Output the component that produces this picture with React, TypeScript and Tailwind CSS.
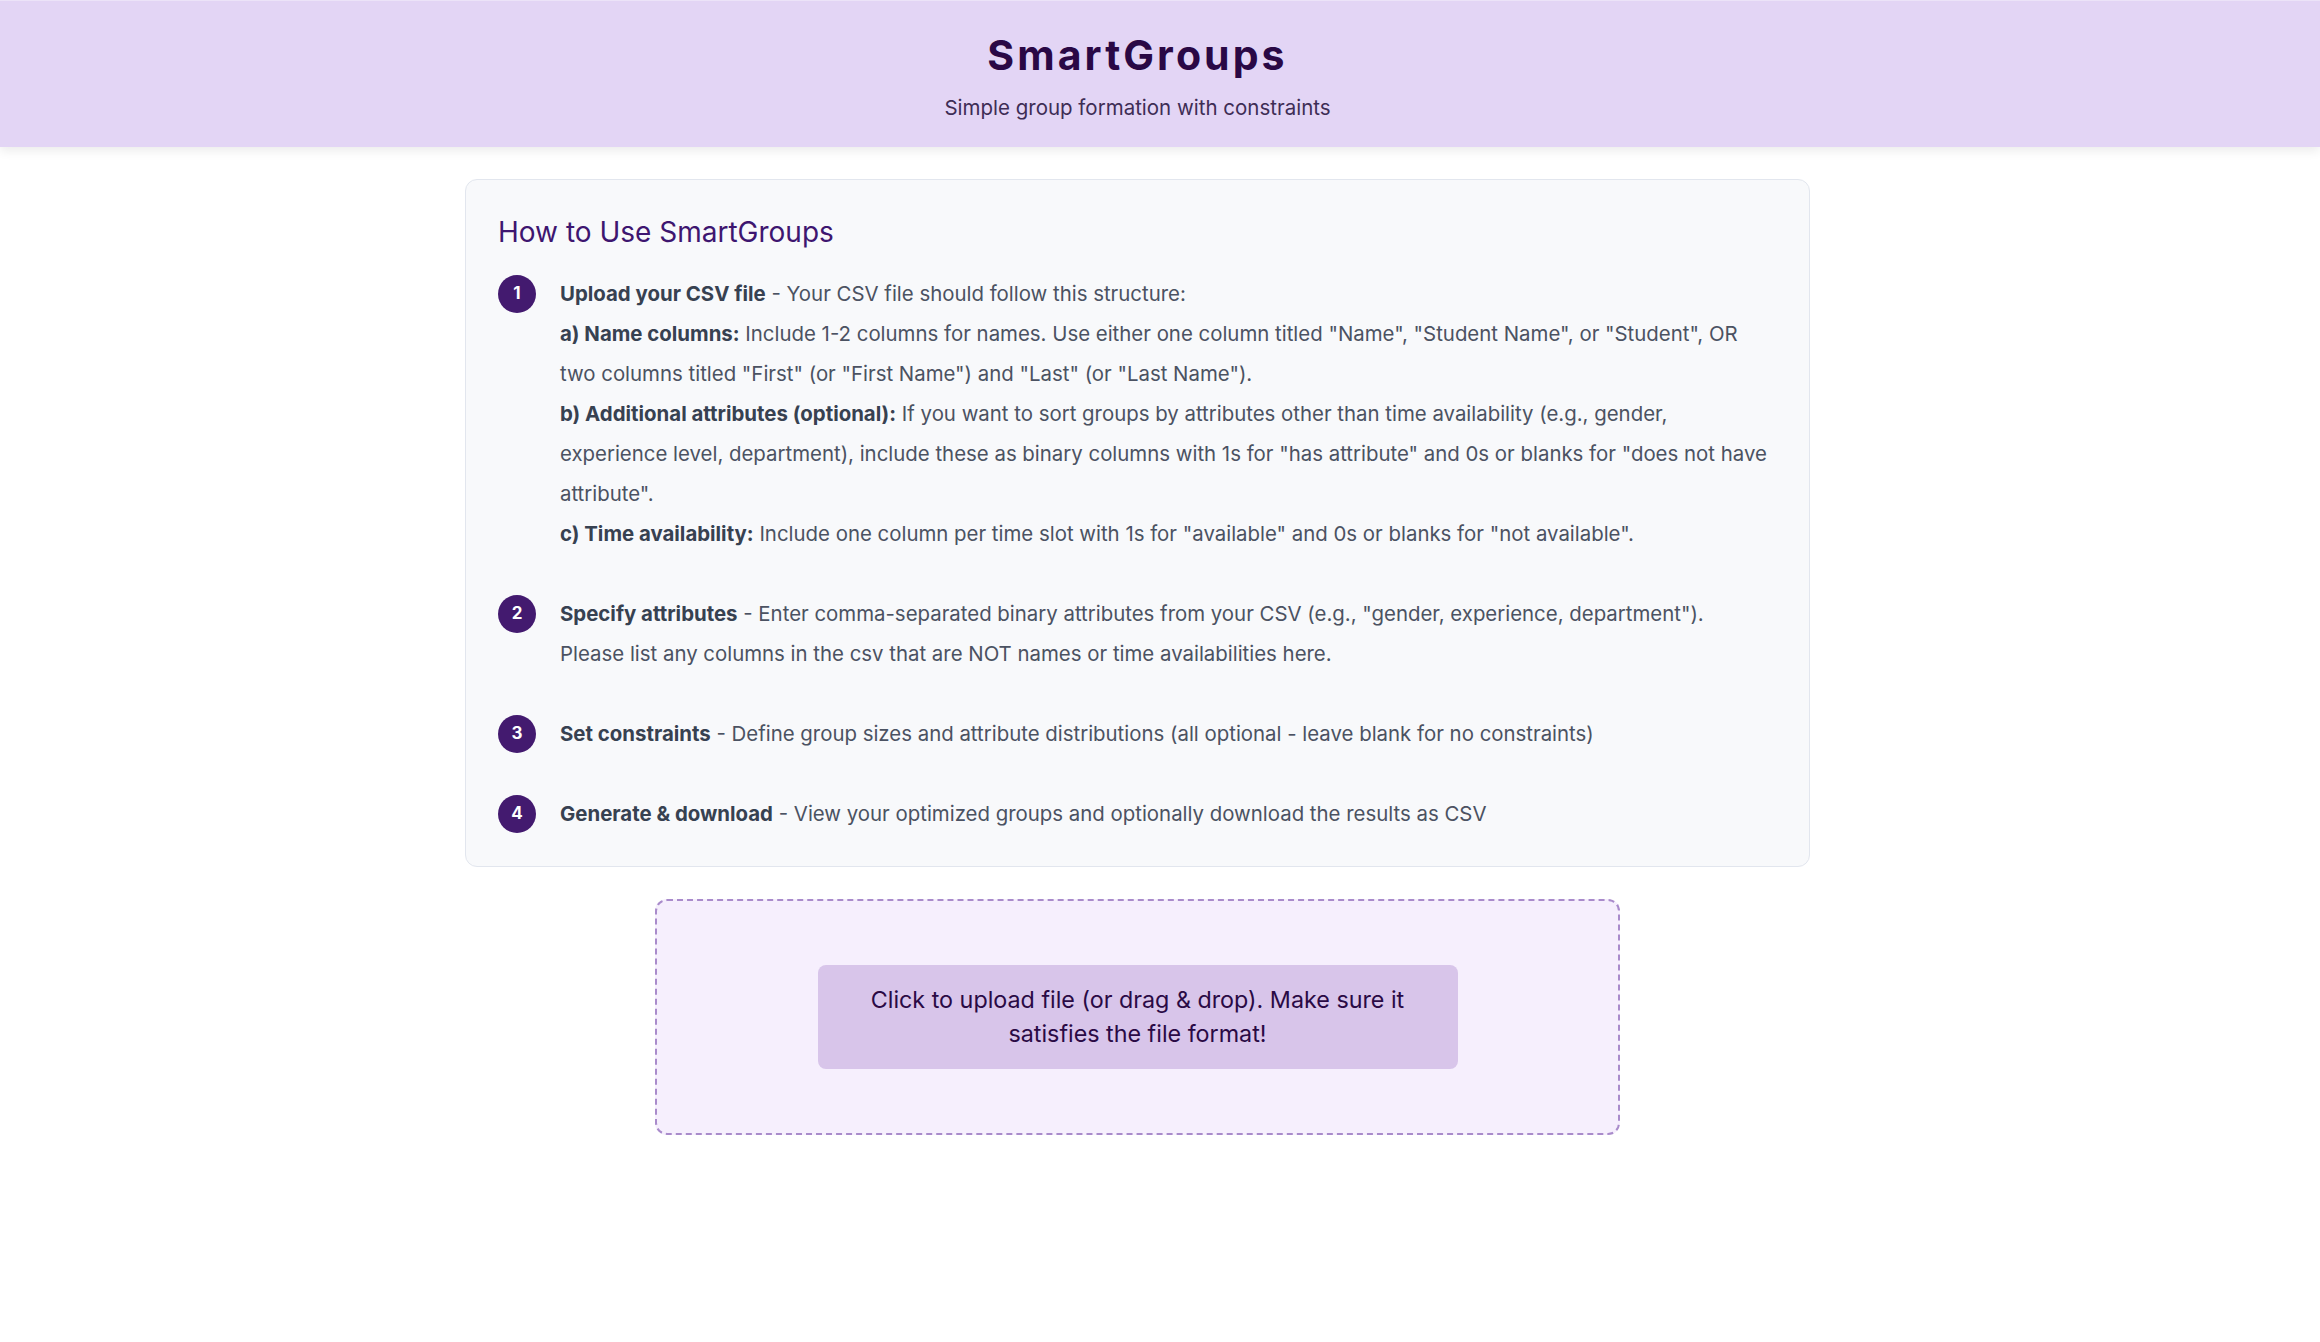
import React from "react";

interface StepProps {
  n: number;
  children: React.ReactNode;
}

const Step: React.FC<StepProps> = ({ n, children }) => {
  return (
    <li className="flex items-start gap-6">
      <span className="flex-none w-[38px] h-[38px] rounded-full bg-[#431a6f] text-white text-[17px] font-bold flex items-center justify-center mt-[1px]">
        {n}
      </span>
      <div className="flex-1 text-[20.4px] leading-[40px] text-[#4b5262]">{children}</div>
    </li>
  );
};

const B: React.FC<{ children: React.ReactNode }> = ({ children }) => (
  <strong className="font-bold text-[#374151]">{children}</strong>
);

export default function App() {
  return (
    <div className="min-h-screen bg-white" style={{ fontFamily: "Inter, 'Open Sans', sans-serif" }}>
      <header className="bg-[#e3d5f5] border-t border-[#ece3f8] shadow-[0_4px_10px_rgba(0,0,0,0.08)] pr-[45px] pt-[27px] pb-[24px] text-center">
        <h1 className="text-[41px] leading-[54px] font-bold tracking-[0.075em] text-[#2a0845]">SmartGroups</h1>
        <p className="mt-[11px] text-[20.5px] leading-[30px] text-[#3e2d55]">Simple group formation with constraints</p>
      </header>

      <main className="pr-[45px] flex flex-col items-center pb-16">
        <section className="mt-8 w-[1345px] bg-[#f8f9fb] border border-[#e2e6ee] rounded-xl p-8">
          <h2 className="text-[28px] leading-[40px] text-[#3e1670] mb-[22px]">How to Use SmartGroups</h2>
          <ol className="flex flex-col gap-10">
            <Step n={1}>
              <div>
                <B>Upload your CSV file</B> - Your CSV file should follow this structure:
              </div>
              <div>
                <B>a) Name columns:</B> Include 1-2 columns for names. Use either one column titled "Name", "Student Name", or "Student", OR two columns titled "First" (or "First Name") and "Last" (or "Last Name").
              </div>
              <div>
                <B>b) Additional attributes (optional):</B> If you want to sort groups by attributes other than time availability (e.g., gender, experience level, department), include these as binary columns with 1s for "has attribute" and 0s or blanks for "does not have attribute".
              </div>
              <div>
                <B>c) Time availability:</B> Include one column per time slot with 1s for "available" and 0s or blanks for "not available".
              </div>
            </Step>
            <Step n={2}>
              <B>Specify attributes</B> - Enter comma-separated binary attributes from your CSV (e.g., "gender, experience, department").
              <br />
              Please list any columns in the csv that are NOT names or time availabilities here.
            </Step>
            <Step n={3}>
              <B>Set constraints</B> - Define group sizes and attribute distributions (all optional - leave blank for no constraints)
            </Step>
            <Step n={4}>
              <B>Generate &amp; download</B> - View your optimized groups and optionally download the results as CSV
            </Step>
          </ol>
        </section>

        <div className="mt-8 w-[965px] bg-[#f6effd] border-2 border-dashed border-[#a98bcb] rounded-xl p-16 flex justify-center">
          <button className="w-[640px] bg-[#d8c5ea] rounded-lg px-10 py-[18px] text-[23.3px] leading-[34px] text-[#2a0a45]">
            Click to upload file (or drag &amp; drop). Make sure it satisfies the file format!
          </button>
        </div>
      </main>
    </div>
  );
}
